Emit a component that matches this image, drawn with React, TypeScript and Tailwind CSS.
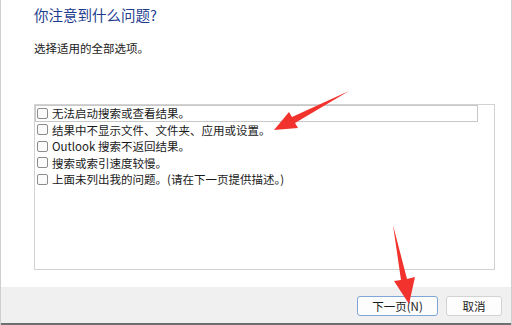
import React from 'react';

const options = [
  '无法启动搜索或查看结果。',
  '结果中不显示文件、文件夹、应用或设置。',
  'Outlook 搜索不返回结果。',
  '搜索或索引速度较慢。',
  '上面未列出我的问题。(请在下一页提供描述。)',
];

const Arrows = () => (
  <svg className="absolute left-0 top-0 pointer-events-none" width="512" height="325" viewBox="0 0 512 325">
    {/* 指向列表的箭头 */}
    <polygon
      points="273,130 288,112 291,117 348,91 294,123 297,128"
      fill="#f2322c"
    />
    {/* 指向“下一页”的箭头 */}
    <polygon
      points="408,304 393,281 400,280 392,225 406,279 414,277"
      fill="#f2322c"
    />
  </svg>
);

const App = () => {
  return (
    <div
      className="relative w-[512px] h-[325px] bg-white border-l border-r border-[#cfcfcf] flex flex-col overflow-hidden"
      style={{ fontFamily: '"Noto Sans CJK SC", "Noto Sans", sans-serif' }}
    >
      <div className="flex-1 pl-[33px] pr-[16px] flex flex-col">
        <h1 className="mt-[5px] text-[14.5px] leading-[20px] text-[#1e3d8f]">你注意到什么问题?</h1>
        <p className="mt-[15px] text-[11.5px] leading-[16px] text-[#1a1a1a]">选择适用的全部选项。</p>

        <div className="mt-[48px] h-[166px] border border-[#d2d2d2] bg-white flex flex-col">
          {options.map((text, i) => (
            <div
              key={i}
              className={`h-[16.5px] flex items-center gap-[4px] pl-[1px] ${
                i === 0 ? 'mr-[16px] border border-[#c8c8c8]' : 'border border-transparent'
              }`}
            >
              <span className="w-[11px] h-[11px] rounded-[2px] border border-[#8c8c8c] bg-[#fbfbfb] shrink-0" />
              <span className="text-[11.5px] leading-[14px] text-[#1a1a1a] whitespace-nowrap">{text}</span>
            </div>
          ))}
        </div>
      </div>

      <div className="h-[38px] bg-[#f0f0f0] flex items-start justify-end gap-[8px] pt-[9px] pr-[9px] border-b-2 border-[#6e6e6e]">
        <button className="w-[81px] h-[20px] rounded-[3px] border border-[#7ea6d6] bg-[#fdfdfd] text-[11.5px] leading-[18px] text-[#1a1a1a]">
          下一页(N)
        </button>
        <button className="w-[56px] h-[20px] rounded-[3px] border border-[#d3d3d3] bg-[#fdfdfd] text-[11.5px] leading-[18px] text-[#1a1a1a]">
          取消
        </button>
      </div>

      <Arrows />
    </div>
  );
};

export default App;
